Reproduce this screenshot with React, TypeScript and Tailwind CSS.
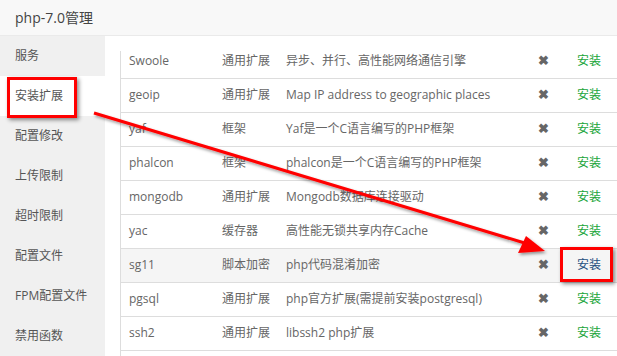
import React from "react"

interface Ext {
  name: string
  type: string
  desc: string
}

const exts: Ext[] = [
  { name: "Swoole", type: "通用扩展", desc: "异步、并行、高性能网络通信引擎" },
  { name: "geoip", type: "通用扩展", desc: "Map IP address to geographic places" },
  { name: "yaf", type: "框架", desc: "Yaf是一个C语言编写的PHP框架" },
  { name: "phalcon", type: "框架", desc: "phalcon是一个C语言编写的PHP框架" },
  { name: "mongodb", type: "通用扩展", desc: "Mongodb数据库连接驱动" },
  { name: "yac", type: "缓存器", desc: "高性能无锁共享内存Cache" },
  { name: "sg11", type: "脚本加密", desc: "php代码混淆加密" },
  { name: "pgsql", type: "通用扩展", desc: "php官方扩展(需提前安装postgresql)" },
  { name: "ssh2", type: "通用扩展", desc: "libssh2 php扩展" },
]

const menu = ["服务", "安装扩展", "配置修改", "上传限制", "超时限制", "配置文件", "FPM配置文件", "禁用函数"]

export default function App() {
  return (
    <div
      className="relative w-[617px] h-[356px] overflow-hidden bg-white"
      style={{ fontFamily: '"Open Sans", "Noto Sans CJK SC", sans-serif' }}
    >
      <div className="h-[36px] bg-[#f8f8f8] border-b border-[#eaeaea] pl-[15px] flex items-center text-[14px] text-[#444]">
        php-7.0管理
      </div>
      <div className="flex h-[320px]">
        <div className="w-[105px] shrink-0 bg-[#f0f0f0] flex flex-col">
          {menu.map((m) => (
            <div
              key={m}
              className={`h-[40px] shrink-0 flex items-center pl-[15px] text-[12px] text-[#555] ${m === "安装扩展" ? "bg-white" : ""}`}
            >
              {m}
            </div>
          ))}
        </div>
        <div className="flex-1 min-w-0 pl-[15px] pt-[15px]">
          <div className="h-full overflow-hidden border-l border-[#ddd]">
            <table className="table-fixed w-[500px] -mt-[7px] text-[12px] text-[#666] border-collapse">
              <colgroup>
                <col className="w-[93px]" />
                <col className="w-[64px]" />
                <col className="w-[252px]" />
                <col className="w-[39px]" />
                <col className="w-[52px]" />
              </colgroup>
              <tbody>
                {exts.map((e) => {
                  const hot = e.name === "sg11"
                  return (
                    <tr key={e.name} className={`h-[34px] border-b border-[#ddd] ${hot ? "bg-[#f5f5f5]" : ""}`}>
                      <td className="px-2 whitespace-nowrap">{e.name}</td>
                      <td className="px-2 whitespace-nowrap">{e.type}</td>
                      <td className="px-2 whitespace-nowrap">{e.desc}</td>
                      <td className="px-2 text-[#666] text-[13px] font-bold">✖</td>
                      <td className={`px-2 whitespace-nowrap ${hot ? "text-[#1f4f80]" : "text-[#20a53a]"}`}>安装</td>
                    </tr>
                  )
                })}
              </tbody>
            </table>
          </div>
        </div>
      </div>

      {/* annotations */}
      <div className="absolute left-[7px] top-[77px] w-[70px] h-[41px] border-[3px] border-[#ff0000] shadow-[2px_2px_4px_rgba(0,0,0,0.45)]" />
      <div className="absolute left-[560px] top-[247px] w-[53px] h-[35px] border-[3px] border-[#ff0000] shadow-[2px_2px_4px_rgba(0,0,0,0.45)]" />
      <svg className="absolute left-0 top-0" width="617" height="356" viewBox="0 0 617 356">
        <defs>
          <filter id="sh" x="-10%" y="-10%" width="120%" height="130%">
            <feDropShadow dx="1.5" dy="2" stdDeviation="1.5" floodColor="#000" floodOpacity="0.4" />
          </filter>
        </defs>
        <g filter="url(#sh)">
          <line x1="94" y1="113" x2="528" y2="244" stroke="#ff0000" strokeWidth="3" />
          <polygon points="545,251 518,253 526,236" fill="#ff0000" />
        </g>
      </svg>
    </div>
  )
}
